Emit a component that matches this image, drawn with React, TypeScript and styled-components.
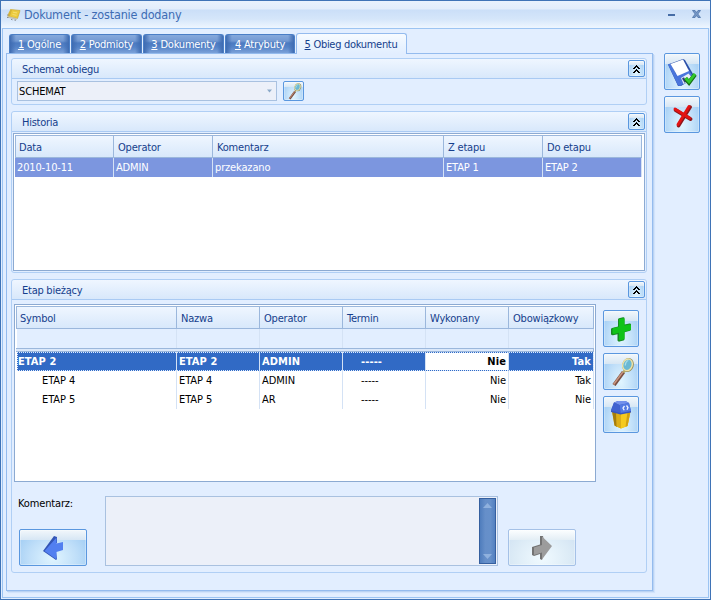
import React from "react";
import styled, { createGlobalStyle, css } from "styled-components";

const Global = createGlobalStyle`
  *, *::before, *::after { box-sizing: border-box; }
  body {
    margin: 0;
    overflow: hidden;
    font: 11px/13px "DejaVu Sans Condensed", "DejaVu Sans", Tahoma, sans-serif;
    font-stretch: condensed;
    letter-spacing: -0.15px;
    color: #000;
    white-space: nowrap;
  }
`;

/* ---------- window frame ---------- */

const Window = styled.div`
  width: 711px;
  height: 600px;
  display: flex;
  flex-direction: column;
  border: 1px solid #3f73b6;
  background: #e2eeff;
`;

const TitleBar = styled.header`
  height: 27px;
  flex: none;
  display: flex;
  align-items: center;
  padding: 0 9px 0 5px;
  background: linear-gradient(#e9f2fd 0, #e2edfb 8px, #cbdff8 9px, #d5e6fa 18px, #eef6ff 27px);
`;

const Title = styled.h1`
  margin: 0 auto 0 2px;
  font-size: 12.5px;
  font-weight: 400;
  line-height: 16px;
  letter-spacing: -0.17px;
  color: #3d6cb4;
`;

const WindowButtons = styled.div`
  display: flex;
  align-items: center;
  gap: 17px;
  margin-top: -1px;
`;

const Client = styled.div`
  flex: 1;
  display: flex;
  align-items: flex-start;
  margin: 0 1px 1px;
  padding: 4px 0 0 3px;
  border: 1px solid #9cc4f2;
  background: #e2eeff;
`;

/* ---------- tabs ---------- */

const Pages = styled.div`
  width: 647px;
`;

const TabList = styled.nav`
  display: flex;
  align-items: flex-end;
  height: 20px;
  padding-left: 3px;
  gap: 1px;
`;

const Tab = styled.button<{ $width: number; $active?: boolean }>`
  width: ${(p) => p.$width}px;
  height: 19px;
  margin: 0;
  padding: 1px 0 0;
  border: 1px solid #4a7ec6;
  border-bottom: 0;
  border-radius: 3px 3px 0 0;
  background:
    linear-gradient(90deg, #3f6cb2 0, transparent 6px, transparent calc(100% - 6px), #3f6cb2 100%),
    linear-gradient(#86a9dc 0, #7399d2 6px, #4c7bc1 8px, #5583c7 12px, #7ba1d9 18px);
  color: #fff;
  font: inherit;
  letter-spacing: -0.2px;
  line-height: 15px;

  ${(p) =>
    p.$active &&
    css`
      height: 21px;
      margin: 0 0 -1px 0;
      padding: 2px 1px 2px 0;
      position: relative;
      border-color: #94bbee;
      background: linear-gradient(#f7fbff, #e9f3ff 60%, #e2eeff);
      color: #153e8c;
      letter-spacing: -0.3px;
    `}
`;

const Page = styled.main`
  height: 538px;
  padding: 4px 5px 0 4px;
  border: 1px solid #94bbee;
  box-shadow: 1px 1px 0 #bad3f3, 2px 2px 1px #d2e3fb;
  background: #e2eeff;
`;

/* ---------- collapsible sections ---------- */

const Section = styled.section<{ $height: number; $gap?: number }>`
  height: ${(p) => p.$height}px;
  margin-bottom: ${(p) => p.$gap ?? 0}px;
  border: 1px solid #b0cff5;
  border-radius: 3px;
`;

const SectionHead = styled.div`
  height: 20px;
  display: flex;
  align-items: center;
  justify-content: space-between;
  padding: 0 1px 0 10px;
  border-bottom: 1px solid #a9caf3;
  border-radius: 3px 3px 0 0;
  background: linear-gradient(#eff6ff, #d8e8fb);
  color: #153e8c;
`;

const SectionTitle = styled.h2`
  margin: 0;
  padding-top: 2px;
  font: inherit;
  letter-spacing: -0.25px;
`;

const glossy = css`
  display: flex;
  align-items: center;
  justify-content: center;
  flex: none;
  padding: 0;
  border: 1px solid #5a97df;
  border-radius: 2px;
  box-shadow: inset 0 0 0 1px rgba(255, 255, 255, 0.3);
  background:
    linear-gradient(#f2f7fb 0, #d6e6f4 29%, transparent 30%),
    radial-gradient(ellipse at 50% 80%, #e0f5ff 0, #c0dff9 50%, #98c7f2 100%);
`;

const CollapseButton = styled.button`
  ${glossy}
  width: 17px;
  height: 17px;
`;

const IconButton = styled.button<{ $width?: number; $height?: number; $disabled?: boolean }>`
  ${glossy}
  width: ${(p) => p.$width ?? 36}px;
  height: ${(p) => p.$height ?? 37}px;
  ${(p) =>
    p.$disabled &&
    css`
      border-color: #a5c1e7;
      background:
        linear-gradient(#fcfeff 0, #e3eef5 29%, transparent 30%),
        radial-gradient(ellipse at 50% 80%, #f0faff 0, #dcebf6 60%, #cee0f2 100%);
    `}
`;

/* ---------- scheme selector ---------- */

const SchemeRow = styled.div`
  display: flex;
  gap: 6px;
  padding: 2px 0 0 5px;
`;

const Combo = styled.div`
  width: 260px;
  height: 20px;
  display: flex;
  align-items: center;
  justify-content: space-between;
  padding: 0 3px 0 1px;
  border: 1px solid #a9c1e0;
  background: #ecf0f9;
`;

/* ---------- grids ---------- */

const HISTORY_HEAD_COLUMNS = "98px 99px 231px 99px 99px";
const HISTORY_COLUMNS = "99px 99px 231px 99px 99px";
const STAGE_COLUMNS = "160px 83px 83px 83px 83px 85px";

const Grid = styled.div<{ $height: number; $margin: string; $width: number }>`
  width: ${(p) => p.$width}px;
  height: ${(p) => p.$height}px;
  margin: ${(p) => p.$margin};
  padding: 1px;
  border: 1px solid #8caad2;
  background: #fff;
`;

const Row = styled.div<{ $columns: string }>`
  display: grid;
  grid-template-columns: ${(p) => p.$columns};
  width: max-content;
`;

const HeaderRow = styled(Row)`
  height: 23px;
  border: 1px solid #9bb7dc;
  border-right: 0;
  background: linear-gradient(#eff6ff, #d8e8fb);
  color: #153e8c;
  letter-spacing: -0.2px;
`;

const HeadCell = styled.div`
  padding: 5px 0 0 4px;
  border-right: 1px solid #9bb7dc;

  &:first-child {
    padding-left: 3px;
  }
`;

const Cell = styled.div<{ $align?: "right"; $indent?: number }>`
  height: 19px;
  padding: 3px 2px 0 ${(p) => p.$indent ?? 2}px;
  border-right: 1px solid #d4e2f5;
  text-align: ${(p) => p.$align ?? "left"};
`;

const HistoryRow = styled(Row)`
  background: #7c96df;
  color: #fff;
`;

const FilterRow = styled(Row)`
  height: 19px;
  margin-left: 1px;
  background: #e2eeff;
`;

const Splitter = styled.div`
  width: 578px;
  height: 4px;
  border: 1px solid #9bb7dc;
  border-width: 1px 1px 1px 0;
  background: #dbe8fa;
`;

const StageRow = styled(Row)<{ $selected?: boolean }>`
  margin-left: 1px;
  letter-spacing: -0.05px;
  ${(p) =>
    p.$selected &&
    css`
      background: #316ac5;
      color: #fff;
      font-weight: 700;
      letter-spacing: 0.1px;
      outline: 1px dotted #dcebff;
      outline-offset: -1px;

      ${Cell}:nth-child(5) {
        background: #fff;
        color: #000;
        border-block: 1px dotted #316ac5;
        padding-top: 2px;
      }
    `}
`;

const StageBody = styled.div`
  display: flex;
  gap: 7px;
  padding-left: 2px;
`;

const ButtonStack = styled.div<{ $top: number }>`
  display: flex;
  flex-direction: column;
  gap: 6px;
  padding-top: ${(p) => p.$top}px;
`;

/* ---------- comment bar ---------- */

const CommentBar = styled.div`
  display: flex;
  align-items: flex-end;
  height: 70px;
  margin-top: 14px;
  padding-left: 6px;
`;

const CommentLabel = styled.div`
  width: 87px;
  height: 70px;
  display: flex;
  flex-direction: column;
  justify-content: space-between;
  padding-top: 1px;

  button {
    margin-left: 1px;
  }
`;

const CommentBox = styled.div`
  width: 393px;
  height: 70px;
  display: flex;
  justify-content: flex-end;
  margin-right: 10px;
  padding: 1px;
  border: 1px solid #a9c1e0;
  background: #ecf0f9;
`;

const ScrollBar = styled.div`
  width: 17px;
  height: 66px;
  display: flex;
  flex-direction: column;
  align-items: center;
  justify-content: space-between;
  padding: 4px 0;
  border: 1px solid #355f9f;
  background: linear-gradient(90deg, #4f7dbd, #668fc9 35%, #6690ca 70%, #5380c0);
`;

const SideBar = styled.aside`
  display: flex;
  flex-direction: column;
  gap: 6px;
  padding: 20px 0 0 11px;
`;

/* ---------- icons ---------- */

const NoteIcon = () => (
  <svg width="16" height="16" viewBox="0 0 16 16">
    <path d="M4.500 2.500l9.500 1-2.500 8-8.500-2z" fill="#ecca3e" stroke="#d0ac32" strokeWidth=".7" />
    <path d="M1.500 9l10 2.500-1.200 1.600-8.300-2.300z" fill="#c4c3b4" />
    <path d="M2.500 6l2-3.300 1.500.3-2 6-2.500.6z" fill="#d4b236" />
    <path d="M1 8h1.500M1 10.500h1.500M5 12.300l1.500.5M8.500 13.200h1.500" stroke="#8c8e91" />
    <path d="M7 5.200l4 .7M6.500 7.500l4 .8" stroke="#f5e070" />
  </svg>
);

const MinimizeIcon = () => (
  <svg width="7" height="10"><path d="M0 6H7" stroke="#466da6" strokeWidth="2" /></svg>
);

const CloseIcon = () => (
  <svg width="9" height="8" viewBox="0 0 9 8">
    <path d="M.5.500H3L4.500 2.500 6 .5h2.500L5.800 4l2.700 3.500H6L4.500 5.500 3 7.500H.5L3.200 4z" fill="#7697c5" stroke="#4d73aa" strokeWidth=".8" />
  </svg>
);

const ChevronsIcon = () => (
  <svg width="9" height="10" viewBox="0 0 9 10" shapeRendering="crispEdges">
    <path d="M4 1h1v1h1v1h1v1h1v1H6V4H5V3H4v1H3v1H1V4h1V3h1V2h1zM4 5h1v1h1v1h1v1h1v1H6V8H5V7H4v1H3v1H1V8h1V7h1V6h1z" fill="#000" />
  </svg>
);

const MagnifierIcon = ({ size = 31 }: { size?: number }) => (
  <svg width={size} height={size} viewBox="0 0 31 31">
    <path d="M17.500 16L8 29" stroke="#7a4f42" strokeWidth="3.800" />
    <path d="M17 15.800L7.600 28.500" stroke="#c9957e" strokeWidth="1.500" />
    <path d="M19.500 13.500l-2 3" stroke="#b5aa68" strokeWidth="2.500" />
    <ellipse cx="22" cy="9" rx="4.800" ry="6" transform="rotate(18 22 9)" fill="#5fa9c6" stroke="#96905c" strokeWidth="2" />
    <ellipse cx="21.500" cy="8.800" rx="4.700" ry="5.900" transform="rotate(18 21.500 8.800)" fill="#6ab8d3" stroke="#efe3a6" strokeWidth="1.400" />
    <path d="M19.300 9.500q.2-4 3-5" fill="none" stroke="#a9dce9" strokeWidth="1.300" />
  </svg>
);

const PlusIcon = () => (
  <svg width="22" height="27" viewBox="0 -1 22 27">
    <path d="M8 3.500q0-1 1-1.300l4-1q1.500-.2 1.500 1v6.300l5-1q1.500-.2 1.500 1v5q0 1-1 1.300l-5.500 1.500v7q0 1-1 1.300l-4 1q-1.500.2-2-1v-6.300l-4.500 1q-1.500.2-2-1v-5q0-1 1-1.300l6-1.500z" fill="#168a22" />
    <path d="M9.500 3l3.500-.8q1.500-.2 1.500 1v6.300l5-1q1.500-.2 1.500 1v3.500q0 1-1 1.300l-5.500 1.500v6.500q0 1-1 1.300l-3 .7q-1.500.2-1.500-1v-6.500l-5 1.200q-1.500.2-1.500-1v-3.700q0-1 1-1.300l5.500-1.300v-6.700q0-.8.500-1z" fill="#10c319" />
  </svg>
);

const BinIcon = () => (
  <svg width="22" height="30" viewBox="0 0 22 30">
    <path d="M2 11H20.500L17.500 26 11 28.500 4.500 25.500z" fill="#e8b818" />
    <path d="M2 11L7 13V27L4.500 25.500z" fill="#a57d0c" />
    <path d="M6 13L11 14V28.500L6.500 26.500z" fill="#dcae17" />
    <path d="M11 14L20.500 11 17.500 26 11 28.500z" fill="#f5ca1e" />
    <path d="M17.500 12L20.500 11 17.500 26 15.500 26.800z" fill="#d1a011" />
    <path d="M4 2.500L8 1H15.500L19 3 21 11V12.500L10.500 14.500 1 12V10.500z" fill="#3656be" />
    <path d="M4 2.500L8 1H15.500L19 3 9.500 5z" fill="#7391ec" />
    <path d="M9.500 5L19 3 21 11 10.500 13z" fill="#527ae3" />
    <path d="M4 2.500L9.500 5 10.500 13 1 10.500z" fill="#3f62d0" />
    <path d="M14.500 6L13 8l1.200 2.200M16.500 5.500L18 7.500l-1 2.300" fill="none" stroke="#f1f5ff" strokeWidth="1.300" />
  </svg>
);

const SaveIcon = () => (
  <svg width="30" height="30" viewBox="0 0 30 30">
    <path d="M1 7.500L16 2l2 1 10 17.500L14 29l-3 0z" fill="#2b4fa8" />
    <path d="M1 7.500L3.500 6.500 14.500 27.500 13.500 29 11 28.500z" fill="#4a76dc" />
    <path d="M8.500 17L21 12l6.500 9.500L14.500 28z" fill="#4a76dc" />
    <path d="M3.500 7L16 2.500l6 11.500L10.500 19z" fill="#fff" />
    <path d="M14 21l7.500-4.500L26 22l-9.500 5z" fill="#e7edf9" />
    <path d="M15 21.500l2-1.200 2.500 4.500-2 1z" fill="#2f3f80" />
    <path d="M18.500 21.500l3.500 4 6-8" fill="none" stroke="#176e17" strokeWidth="4.300" />
    <path d="M18.500 21l3.500 3.800 6-8" fill="none" stroke="#31c92c" strokeWidth="2.800" />
  </svg>
);

const CancelIcon = () => (
  <svg width="24" height="26" viewBox="0 0 24 26">
    <path d="M5 7.500L20 16.500M19.500 4.500L8 23" stroke="#8e171b" strokeWidth="3.600" strokeLinecap="round" transform="translate(.6 .6)" />
    <path d="M5 7L19.500 16M19 4.500L8 22.500" stroke="#e31313" strokeWidth="2.900" strokeLinecap="round" />
  </svg>
);

const BackIcon = () => (
  <svg width="20" height="25" viewBox="0 -1 20 25">
    <path d="M11 0l3 1v6h-1v9l1 7-1 1L0 15z" fill="#3355b5" />
    <path d="M13.500 1.500V7.500L20 6V14l-6.500 2V23.500L1.500 15z" fill="#527ff0" />
  </svg>
);

const ForwardIcon = () => (
  <svg width="20" height="25" viewBox="0 -1 20 25">
    <path d="M8 0h3l2 12-3 12L8 23v-5l-6 2-2-1v-8l8-2.500z" fill="#737373" />
    <path d="M10 .5L20 10 10 23.500V16.500L2 19v-7.500L10 9z" fill="#9c9c9c" />
  </svg>
);

const DropArrow = () => (
  <svg width="7" height="4"><path d="M1 0.500h5L3.500 3.500z" fill="#8ba9c9" /></svg>
);

const ScrollArrow = ({ down }: { down?: boolean }) => (
  <svg width="9" height="5"><path d={down ? "M0 0h9L4.500 5z" : "M0 5h9L4.500 0z"} fill="#8fb1de" /></svg>
);

/* ---------- data ---------- */

const TABS = [
  { key: "1", name: "Ogólne", width: 61 },
  { key: "2", name: "Podmioty", width: 71 },
  { key: "3", name: "Dokumenty", width: 81 },
  { key: "4", name: "Atrybuty", width: 70 },
  { key: "5", name: "Obieg dokumentu", width: 111 },
];

const HISTORY_HEADS = ["Data", "Operator", "Komentarz", "Z etapu", "Do etapu"];
const HISTORY = [["2010-10-11", "ADMIN", "przekazano", "ETAP 1", "ETAP 2"]];

const STAGE_HEADS = ["Symbol", "Nazwa", "Operator", "Termin", "Wykonany", "Obowiązkowy"];
const STAGES = [
  { symbol: "ETAP 2", operator: "ADMIN", required: "Tak", root: true },
  { symbol: "ETAP 4", operator: "ADMIN", required: "Tak" },
  { symbol: "ETAP 5", operator: "AR", required: "Nie" },
];

const Header = ({ children }: { children: React.ReactNode }) => (
  <SectionHead>
    <SectionTitle>{children}</SectionTitle>
    <CollapseButton><ChevronsIcon /></CollapseButton>
  </SectionHead>
);

export default function App() {
  return (
    <>
      <Global />
      <Window>
        <TitleBar>
          <NoteIcon />
          <Title>Dokument - zostanie dodany</Title>
          <WindowButtons><MinimizeIcon /><CloseIcon /></WindowButtons>
        </TitleBar>
        <Client>
          <Pages>
            <TabList>
              {TABS.map((t) => (
                <Tab key={t.key} $width={t.width} $active={t.key === "5"}>
                  <u>{t.key}</u> {t.name}
                </Tab>
              ))}
            </TabList>
            <Page>
              <Section $height={47} $gap={6}>
                <Header>Schemat obiegu</Header>
                <SchemeRow>
                  <Combo>SCHEMAT<DropArrow /></Combo>
                  <IconButton $width={21} $height={20}><MagnifierIcon size={18} /></IconButton>
                </SchemeRow>
              </Section>

              <Section $height={162} $gap={6}>
                <Header>Historia</Header>
                <Grid $width={632} $height={138} $margin="1px 0 0 1px">
                  <HeaderRow $columns={HISTORY_HEAD_COLUMNS}>
                    {HISTORY_HEADS.map((h) => <HeadCell key={h}>{h}</HeadCell>)}
                  </HeaderRow>
                  {HISTORY.map((r) => (
                    <HistoryRow key={r[0]} $columns={HISTORY_COLUMNS}>
                      {r.map((c, i) => <Cell key={i}>{c}</Cell>)}
                    </HistoryRow>
                  ))}
                </Grid>
              </Section>

              <Section $height={294}>
                <Header>Etap bieżący</Header>
                <StageBody>
                  <Grid $width={582} $height={178} $margin="4px 0 0">
                    <HeaderRow $columns={STAGE_COLUMNS}>
                      {STAGE_HEADS.map((h) => <HeadCell key={h}>{h}</HeadCell>)}
                    </HeaderRow>
                    <FilterRow $columns={STAGE_COLUMNS}>
                      {STAGE_HEADS.map((h) => <Cell key={h} />)}
                    </FilterRow>
                    <Splitter />
                    {STAGES.map((s) => (
                      <StageRow key={s.symbol} $columns={STAGE_COLUMNS} $selected={s.root}>
                        <Cell $indent={s.root ? 1 : 25}>{s.symbol}</Cell>
                        <Cell>{s.symbol}</Cell>
                        <Cell>{s.operator}</Cell>
                        <Cell $indent={18}>-----</Cell>
                        <Cell $align="right">Nie</Cell>
                        <Cell $align="right">{s.required}</Cell>
                      </StageRow>
                    ))}
                  </Grid>
                  <ButtonStack $top={10}>
                    <IconButton><PlusIcon /></IconButton>
                    <IconButton><MagnifierIcon /></IconButton>
                    <IconButton><BinIcon /></IconButton>
                  </ButtonStack>
                </StageBody>
                <CommentBar>
                  <CommentLabel>
                    <span>Komentarz:</span>
                    <IconButton $width={68}><BackIcon /></IconButton>
                  </CommentLabel>
                  <CommentBox>
                    <ScrollBar><ScrollArrow /><ScrollArrow down /></ScrollBar>
                  </CommentBox>
                  <IconButton $width={68} $disabled><ForwardIcon /></IconButton>
                </CommentBar>
              </Section>
            </Page>
          </Pages>
          <SideBar>
            <IconButton><SaveIcon /></IconButton>
            <IconButton><CancelIcon /></IconButton>
          </SideBar>
        </Client>
      </Window>
    </>
  );
}
